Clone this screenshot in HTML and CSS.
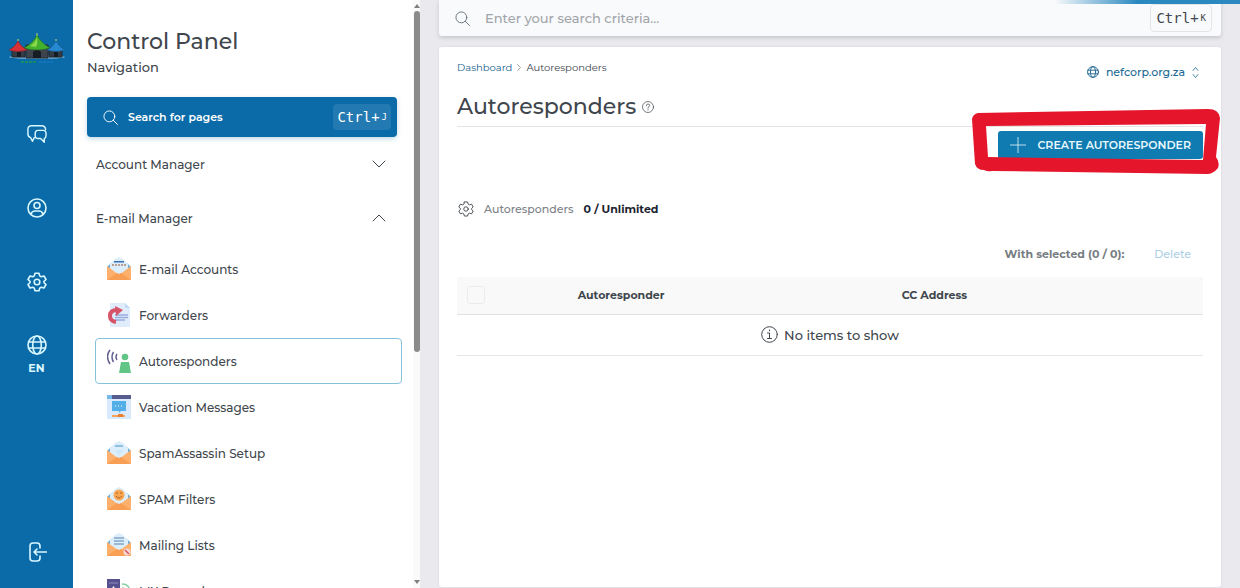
FILE: index.html
```html
<!DOCTYPE html>
<html lang="en">
<head>
    <meta charset="UTF-8">
    <meta name="viewport" content="width=device-width, initial-scale=1.0">
    <title>Autoresponders - Control Panel</title>
    <link rel="stylesheet" href="styles.css">
</head>
<body>

    <!-- shared icons -->
    <svg class="defs" aria-hidden="true">
        <symbol id="search" viewBox="0 0 16 16">
            <circle cx="6.8" cy="6.8" r="5.8"/><path d="M11 11l4.5 4.5"/>
        </symbol>
        <symbol id="gear" viewBox="0 0 20 20">
            <path d="M8 1.2h4l.7 2.7 1.6.9 2.7-.8 2 3.5-2 1.8v1.4l2 1.8-2 3.5-2.7-.8-1.6.9-.7 2.7H8l-.7-2.7-1.6-.9-2.7.8-2-3.5 2-1.8V9.3l-2-1.8 2-3.5 2.7.8 1.6-.9z"/><circle cx="10" cy="10" r="2.8"/>
        </symbol>
        <symbol id="globe" viewBox="0 0 20 20">
            <circle cx="10" cy="10" r="9"/><ellipse cx="10" cy="10" rx="4.3" ry="9"/><path d="M1.5 7h17M1.5 13h17"/>
        </symbol>
        <symbol id="envelope" viewBox="0 0 24 24">
            <path fill="#6fb0dc" d="M0 10l4-4h16l4 4v4H0z"/>
            <path fill="#dceefb" d="M3 7l5-5 4-2 4 2 5 5v11H3z"/>
            <path fill="#fdb06b" d="M0 9l12 9 12-9v14H0z"/>
            <path fill="#f99f55" d="M0 23l10-7 2 1 2-1 10 7z"/>
        </symbol>
    </svg>

    <div class="progress"></div>

    <nav class="rail" aria-label="Main">
        <a href="#" class="logo" aria-label="Home">
            <svg viewBox="0 0 58 32">
                <ellipse cx="29" cy="24" rx="28" ry="2" fill="#79add0"/>
                <path fill="#353b43" stroke="#202831" d="M4 15h13v9H4zM41 15h13v9H41z"/>
                <path fill="#3d444d" stroke="#202831" d="M18 12h22v13H18z"/>
                <path fill="#161c23" d="M25 25v-6q4-5 8 0v6zM9 24v-5q2-3 4 0v5zM46 24v-5q2-3 4 0v5z"/>
                <path fill="#d92f36" stroke="#8c2530" stroke-width=".6" d="M1 17q6-3 9-9 3 6 9 9-9 3-18 0z"/>
                <path fill="#2789d1" stroke="#155b91" stroke-width=".6" d="M39 17q6-3 9-9 3 6 9 9-9 3-18 0z"/>
                <path fill="#43b02e" stroke="#266e24" stroke-width=".6" d="M16 15Q25 10 29 2q4 8 13 13-13 4-26 0z"/>
                <path fill="#8bd84c" d="M22 13q6-4 7-9 1 6-1 10z"/>
                <path stroke="#c7dd65" d="M29 0v3M10 6v2M48 6v2"/>
                <path stroke="#168c68" stroke-width="2" stroke-dasharray="3 1" d="M13 29h16"/>
                <path stroke="#1275bd" stroke-width="2" stroke-dasharray="3 1" d="M31 29h14"/>
            </svg>
        </a>
        <a href="#" class="rail-link" aria-label="Messages">
            <svg class="line" viewBox="0 0 22 20"><path d="M8 14l-2 4-2-4Q1 13 1 10V5q0-4 4-4h11q4 0 4.500 4M12 6h6q3 0 3 4v1q0 3-2 4v4l-4-4h-3q-3 0-3-4v-1q0-4 3-4z"/></svg>
        </a>
        <a href="#" class="rail-link" aria-label="Account">
            <svg class="line" viewBox="0 0 20 20"><circle cx="10" cy="10" r="9"/><circle cx="10" cy="7.5" r="3"/><path d="M4 16q1-3 4-3h4q3 0 4 3"/></svg>
        </a>
        <a href="#" class="rail-link" aria-label="Settings">
            <svg class="line"><use href="#gear"/></svg>
        </a>
        <a href="#" class="rail-link lang">
            <svg class="line"><use href="#globe"/></svg>
            <span>EN</span>
        </a>
        <a href="#" class="rail-link logout" aria-label="Log out">
            <svg class="line" viewBox="0 0 20 20"><path d="M13 6V4q0-3-3-3H6Q3 1 3 4v12q0 3 3 3h4q3 0 3-3v-2M7 10h13M10 7l-3 3 3 3"/></svg>
        </a>
    </nav>

    <aside class="sidebar">
        <div class="sidebar-body">
            <header class="sidebar-head">
                <h2>Control Panel</h2>
                <p>Navigation</p>
            </header>
            <button type="button" class="page-search">
                <svg class="line"><use href="#search"/></svg>
                <span>Search for pages</span>
                <kbd>Ctrl+<small>J</small></kbd>
            </button>
            <button type="button" class="group">Account Manager
                <svg class="line" viewBox="0 0 14 8"><path d="M1 1l6 6 6-6"/></svg>
            </button>
            <button type="button" class="group" aria-expanded="true">E-mail Manager
                <svg class="line" viewBox="0 0 14 8"><path d="M1 7l6-6 6 6"/></svg>
            </button>
            <div class="menu">
                <a href="#">
                    <svg viewBox="0 0 24 24"><use href="#envelope"/><path fill="#3b72b4" d="M7 4h10v1.500H7z"/><path stroke="#bb9f91" stroke-width="2" stroke-dasharray="2 1" d="M5 8h14"/></svg>
                    E-mail Accounts
                </a>
                <a href="#">
                    <svg viewBox="0 0 24 24"><path fill="#dfecfc" d="M3 0h15l5 5v19H3z"/><path fill="#c3daf7" d="M18 0v5h5z"/><path stroke="#9aaada" stroke-width="1.5" d="M8 12h13M8 14.500h13M8 17h10"/><path fill="none" stroke="#d75368" stroke-width="4" d="M9 19Q3 18 3 13q0-6 7-6"/><path fill="#d75368" d="M8 3l8 4-7 6z"/></svg>
                    Forwarders
                </a>
                <a href="#" class="active">
                    <svg viewBox="0 0 24 24"><path fill="none" stroke="#62618f" stroke-width="1.5" d="M3 1q-5 6 0 14M6.500 3q-3 5 0 10M10 5q-2 3 0 6"/><circle cx="18" cy="8" r="3.3" fill="#61c585"/><path fill="#61c585" d="M14 13h8l2 11H12z"/></svg>
                    Autoresponders
                </a>
                <a href="#">
                    <svg viewBox="0 0 24 24"><path fill="#d8eafb" d="M0 0h24v24H0z"/><path fill="#575c8e" d="M0 0h24v4H0z"/><path fill="#76b9e8" d="M0 0h5v4H0z"/><path fill="#54afe9" d="M5 6h14v10h-5l-2 2v-2H5z"/><path stroke="#fff" stroke-dasharray="1 2" d="M8 11h8"/><path fill="#f6a15c" d="M5 20h13v2H5z"/><path fill="#e68132" d="M11 19h5v3h-5z"/></svg>
                    Vacation Messages
                </a>
                <a href="#">
                    <svg viewBox="0 0 24 24"><use href="#envelope"/><path stroke="#8fbfdf" stroke-width="2" d="M8 5h8"/><path fill="#cce8fc" d="M8 9h8l-4 6z"/></svg>
                    SpamAssassin Setup
                </a>
                <a href="#">
                    <svg viewBox="0 0 24 24"><use href="#envelope"/><circle cx="12" cy="8" r="5.5" fill="#f8a652"/><path fill="none" stroke="#a96529" d="M9 9q3 4 6 0M10 5v2M14 5v2"/></svg>
                    SPAM Filters
                </a>
                <a href="#">
                    <svg viewBox="0 0 24 24"><use href="#envelope"/><path stroke="#83a6c8" stroke-width="1.5" d="M7 5h10M7 8h10M7 11h10"/><circle cx="20" cy="19" r="3.5" fill="#f5d8d4"/><path stroke="#d75368" stroke-width="1.5" d="M18 17l4 4"/></svg>
                    Mailing Lists
                </a>
                <a href="#">
                    <svg viewBox="0 0 24 24"><path fill="#55518f" d="M0 0h13v24H0z"/><path stroke="#8e8bc0" d="M2 4h9"/><path fill="#fff" d="M6.500 7l2 3-2 3-2-3z"/><path fill="none" stroke="#85cfa0" stroke-width="1.5" d="M15 5q8 0 8 9M15 9q4 0 4 5"/></svg>
                    MX Records
                </a>
            </div>
        </div>
        <div class="scrollbar" aria-hidden="true">
            <svg viewBox="0 0 6 4"><path d="M3 0l3 4H0z"/></svg>
            <div class="thumb"></div>
            <svg class="down" viewBox="0 0 6 4"><path d="M0 0h6L3 4z"/></svg>
        </div>
    </aside>

    <main class="main">
        <label class="topbar">
            <svg class="line"><use href="#search"/></svg>
            <input type="search" aria-label="Search" placeholder="Enter your search criteria...">
            <kbd>Ctrl+<small>K</small></kbd>
        </label>

        <section class="card">
            <div class="card-top">
                <nav class="crumbs" aria-label="Breadcrumb">
                    <a href="#">Dashboard</a>
                    <svg class="line" viewBox="0 0 4 7"><path d="M.5.5l3 3-3 3"/></svg>
                    <span>Autoresponders</span>
                </nav>
                <button type="button" class="domain">
                    <svg class="line"><use href="#globe"/></svg>
                    nefcorp.org.za
                    <svg class="line arrows" viewBox="0 0 7 11"><path d="M1 3.500l2.500-3 2.500 3M1 7.500l2.500 3 2.500-3"/></svg>
                </button>
            </div>

            <div class="title">
                <h1>Autoresponders</h1>
                <svg class="line" viewBox="0 0 12 12"><circle cx="6" cy="6" r="5.5"/><path d="M4.300 4.700q0-1.700 1.700-1.700t1.700 1.500Q7.700 5.500 6 6.500v.7M6 8.500v.5"/></svg>
            </div>

            <div class="actions">
                <div class="create-wrap">
                    <button type="button" class="create">
                        <svg class="line" viewBox="0 0 16 16"><path d="M8 0v16M0 8h16"/></svg>
                        CREATE AUTORESPONDER
                    </button>
                    <svg class="marker" viewBox="0 0 248 66" aria-hidden="true">
                        <path fill="#e5162b" fill-rule="evenodd" d="M6 4L236 0q11 0 12 9l-4 39q4 5 2 11-5 6-11 6L20 62q-4 1-8-1-7 0-9-6L0 10q1-5 6-6zM14 17l2 31L231 51l3-36z"/>
                    </svg>
                </div>
            </div>

            <div class="usage">
                <svg class="line"><use href="#gear"/></svg>
                <span>Autoresponders</span>
                <strong>0 / Unlimited</strong>
            </div>

            <div class="selection">
                <span>With selected (0 / 0):</span>
                <button type="button" disabled>Delete</button>
            </div>

            <table>
                <thead>
                    <tr>
                        <th class="col-check"><input type="checkbox" aria-label="Select all"></th>
                        <th class="col-name">Autoresponder</th>
                        <th class="col-cc">CC Address</th>
                        <th></th>
                    </tr>
                </thead>
                <tbody>
                    <tr>
                        <td colspan="4">
                            <div class="empty">
                                <svg class="line" viewBox="0 0 17 17"><circle cx="8.5" cy="8.5" r="7.8"/><path d="M6.500 7h2v5.500M6.500 12.500h4M8.500 4v.8"/></svg>
                                No items to show
                            </div>
                        </td>
                    </tr>
                </tbody>
            </table>
        </section>
    </main>

</body>
</html>
```
FILE: styles.css
```css
* {
    box-sizing: border-box;
}

body {
    margin: 0;
    display: flex;
    height: 100vh;
    overflow: hidden;
    font-family: Montserrat, Inter, sans-serif;
    font-size: 13px;
    font-weight: 500;
    color: #40464d;
    background: #e9e9ee;
}

h1, h2, p {
    margin: 0;
    font-weight: 500;
}

a {
    color: inherit;
    text-decoration: none;
}

button {
    font: inherit;
    color: inherit;
    background: none;
    border: 0;
    padding: 0;
    cursor: pointer;
}

svg {
    flex: none;
}

.defs {
    position: absolute;
    width: 0;
    height: 0;
}

.line {
    fill: none;
    stroke: currentColor;
    stroke-linecap: round;
    stroke-linejoin: round;
}

kbd {
    font: 14px "DejaVu Sans Mono", monospace;
    display: flex;
    align-items: center;
    gap: 2px;
    border-radius: 4px;
}

kbd small {
    font-size: 9px;
}

.progress {
    position: absolute;
    top: 0;
    right: 0;
    width: 15%;
    height: 4px;
    background: linear-gradient(to right, transparent, #2b88c0 45%, #2b88c0);
}

/* left rail */
.rail {
    flex: none;
    width: 73px;
    padding: 33px 0 26px;
    display: flex;
    flex-direction: column;
    align-items: center;
    background: #0a6ba8;
    color: #d9f7ff;
}

.logo svg {
    display: block;
    width: 58px;
    height: 32px;
}

.rail-link {
    margin-top: 54px;
    height: 20px;
}

.rail-link svg {
    display: block;
    width: 20px;
    height: 20px;
    stroke-width: 1.6;
}

.logo + .rail-link {
    margin-top: 59px;
}

.lang {
    height: 40px;
    margin-top: 43px;
    display: flex;
    flex-direction: column;
    align-items: center;
    gap: 6px;
    font-size: 11px;
    font-weight: 700;
}

.logout {
    margin-top: auto;
}

/* navigation */
.sidebar {
    flex: none;
    width: 347px;
    display: flex;
    background: #fff;
    overflow: hidden;
}

.sidebar-body {
    flex: 1;
    padding: 27px 11px 0 14px;
}

.sidebar-head {
    height: 70px;
}

.sidebar-head h2 {
    font-size: 22px;
    line-height: 30px;
}

.sidebar-head p {
    line-height: 20px;
}

.page-search {
    width: 310px;
    height: 40px;
    padding: 0 6px 0 16px;
    display: flex;
    align-items: center;
    gap: 10px;
    border-radius: 4px;
    background: #0a6ba8;
    color: #fff;
    font-size: 11px;
    font-weight: 600;
    box-shadow: 0 2px 5px #0a6ba840;
}

.page-search svg {
    width: 15px;
    height: 15px;
}

.page-search kbd {
    margin-left: auto;
    padding: 0 4px;
    height: 26px;
    background: #2379b2;
}

.group {
    width: 100%;
    height: 54px;
    padding: 0 16px 0 9px;
    display: flex;
    align-items: center;
    justify-content: space-between;
    font-size: 12px;
}

.group svg {
    width: 14px;
    height: 8px;
}

.menu {
    padding-top: 1px;
    font-size: 12px;
}

.menu a {
    height: 46px;
    margin-left: 8px;
    padding-left: 11px;
    width: 307px;
    display: flex;
    align-items: center;
    gap: 8px;
    border: 1px solid transparent;
    border-radius: 4px;
}

.menu svg {
    width: 24px;
    height: 24px;
}

.menu .active {
    border-color: #86c2de;
}

.scrollbar {
    width: 8px;
    padding: 4px 1px;
    display: flex;
    flex-direction: column;
    align-items: center;
    gap: 3px;
    background: #fafafa;
}

.scrollbar svg {
    width: 6px;
    height: 4px;
    fill: #808080;
}

.scrollbar .down {
    margin-top: auto;
}

.thumb {
    width: 6px;
    height: 58vh;
    border-radius: 3px;
    background: #8b8b8b;
}

/* content */
.main {
    flex: 1;
    padding: 0 19px 1px;
    display: flex;
    flex-direction: column;
    gap: 11px;
}

.topbar {
    flex: none;
    height: 36px;
    padding: 0 9px 0 16px;
    display: flex;
    align-items: center;
    gap: 15px;
    border-radius: 0 0 3px 3px;
    background: #f9fafc;
    box-shadow: 0 2px 4px #00000026;
}

.topbar svg {
    width: 15px;
    height: 15px;
    color: #687078;
}

.topbar input {
    flex: 1;
    min-width: 0;
    padding: 0;
    border: 0;
    background: none;
    font: inherit;
}

.topbar input::placeholder {
    color: #a2a5a9;
}

.topbar kbd {
    height: 28px;
    padding: 0 5px;
    border: 1px solid #e3e5e8;
}

.card {
    flex: 1;
    padding: 14px 18px;
    border-radius: 3px;
    background: #fff;
    box-shadow: 0 0 3px #00000014;
}

.card-top {
    height: 32px;
    display: flex;
    justify-content: space-between;
}

.crumbs {
    height: 12px;
    display: flex;
    align-items: center;
    gap: 5px;
    font-size: 10px;
    font-weight: 400;
}

.crumbs a {
    color: #17618e;
}

.crumbs svg {
    width: 4px;
    height: 7px;
    color: #a5a9ad;
}

.domain {
    height: 22px;
    padding-right: 4px;
    display: flex;
    align-items: center;
    gap: 7px;
    font-size: 11px;
    color: #226a94;
}

.domain svg {
    width: 12px;
    height: 12px;
    stroke-width: 1.6;
}

.domain .arrows {
    width: 7px;
    height: 11px;
    stroke-width: .8;
}

.title {
    height: 34px;
    padding-bottom: 6px;
    display: flex;
    align-items: center;
    gap: 6px;
    border-bottom: 1px solid #e2e4e6;
}

.title h1 {
    font-size: 22px;
    line-height: 28px;
}

.title svg {
    width: 12px;
    height: 12px;
    stroke-width: .7;
}

.actions {
    display: flex;
    justify-content: flex-end;
    padding-top: 4px;
}

.create-wrap {
    position: relative;
}

.create {
    height: 28px;
    padding: 0 12px;
    display: flex;
    align-items: center;
    gap: 11px;
    border-radius: 3px;
    background: #0f7bb0;
    color: #e9f8ff;
    font-size: 11px;
    font-weight: 600;
}

.create svg {
    width: 16px;
    height: 16px;
    stroke-width: .8;
}

/* hand drawn frame round the create button */
.marker {
    position: absolute;
    right: -17px;
    top: -22px;
    width: 248px;
    height: 66px;
    pointer-events: none;
}

.usage {
    margin-top: 40px;
    height: 20px;
    padding-left: 1px;
    display: flex;
    align-items: center;
    gap: 10px;
    font-size: 11px;
    color: #7d8287;
}

.usage svg {
    width: 16px;
    height: 16px;
    color: #484e54;
    stroke-width: 1.2;
}

.usage strong {
    font-weight: 700;
    color: #1c242e;
}

.selection {
    margin-top: 21px;
    height: 28px;
    padding-right: 12px;
    display: flex;
    align-items: center;
    justify-content: flex-end;
    gap: 30px;
    font-size: 11px;
}

.selection span {
    font-weight: 700;
    color: #767c82;
}

.selection button {
    color: #acd0e6;
}

table {
    margin-top: 9px;
    width: 100%;
    border-collapse: collapse;
    table-layout: fixed;
}

th {
    height: 37px;
    padding: 0;
    border-bottom: 1px solid #dfe1e3;
    background: #f9f9f9;
    font-size: 11px;
    font-weight: 700;
}

.col-check {
    width: 5%;
}

.col-name {
    width: 34%;
}

.col-cc {
    width: 50%;
}

th input {
    appearance: none;
    display: block;
    width: 18px;
    height: 18px;
    margin: 0 auto;
    border: 1px solid #ececec;
    border-radius: 3px;
}

td {
    height: 41px;
    padding: 0;
    border-bottom: 1px solid #e4e6e8;
}

.empty {
    display: flex;
    align-items: center;
    justify-content: center;
    gap: 6px;
}

.empty svg {
    width: 17px;
    height: 17px;
}
```
